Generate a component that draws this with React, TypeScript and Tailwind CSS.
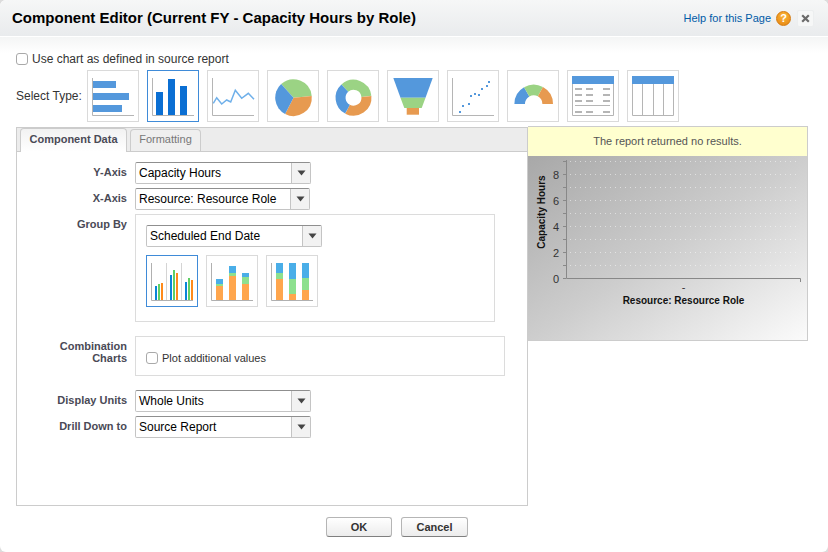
import type { ReactNode } from "react";

const font = "font-['Liberation_Sans',Arial,sans-serif]";

function IconBox({ selected, children }: { selected?: boolean; children: ReactNode }) {
  return (
    <div className={`h-[52px] w-[52px] shrink-0 border ${selected ? "border-[#3f8bd8]" : "border-[#dadada]"} bg-white`}>
      <svg width="50" height="50" viewBox="1 1 50 50" className="block">
        {children}
      </svg>
    </div>
  );
}

function Axes({ x = 5 }: { x?: number }) {
  return <path d={`M${x}.5 8V45.5H47`} fill="none" stroke="#b5b5b5" strokeWidth="1" />;
}

const chartBlue = "#5498dc";
const chartGreen = "#9bd384";
const chartOrange = "#e79a50";

const chartTypes: { key: string; selected?: boolean; art: ReactNode }[] = [
  {
    key: "hbar",
    art: (
      <>
        <Axes />
        <rect x="6" y="11" width="23" height="7" fill={chartBlue} />
        <rect x="6" y="23" width="36" height="7" fill={chartBlue} />
        <rect x="6" y="35" width="29" height="7" fill={chartBlue} />
      </>
    ),
  },
  {
    key: "vbar",
    selected: true,
    art: (
      <>
        <Axes />
        <rect x="9" y="22" width="7" height="23" fill="#0b6fd3" />
        <rect x="21" y="9" width="7" height="36" fill="#0b6fd3" />
        <rect x="33" y="16" width="7" height="29" fill="#0b6fd3" />
      </>
    ),
  },
  {
    key: "line",
    art: (
      <>
        <Axes />
        <polyline
          points="6.3,33.3 9.7,27.7 14.7,34 19.7,30 23.7,32 28.3,20.3 34.7,28.3 41.3,23.3 47,29.3"
          fill="none"
          stroke="#6fb0ea"
          strokeWidth="1.5"
        />
      </>
    ),
  },
  {
    key: "pie",
    art: (
      <>
        <path d="M26.5 27.7L14.2 14.1A18.3 18.3 0 0 1 44.7 25.9Z" fill={chartGreen} />
        <path d="M26.5 27.7L44.7 25.9A18.3 18.3 0 0 1 18.1 43.9Z" fill={chartOrange} />
        <path d="M26.5 27.7L18.1 43.9A18.3 18.3 0 0 1 14.2 14.1Z" fill={chartBlue} />
      </>
    ),
  },
  {
    key: "donut",
    art: (
      <g fill="none" strokeWidth="10">
        <path d="M17.8 18.1A13 13 0 0 1 39.4 26.4" stroke={chartGreen} />
        <path d="M39.4 26.4A13 13 0 0 1 20.5 39.2" stroke={chartOrange} />
        <path d="M20.5 39.2A13 13 0 0 1 17.8 18.1" stroke={chartBlue} />
      </g>
    ),
  },
  {
    key: "funnel",
    art: (
      <>
        <path d="M6.3 8H45.7L38.5 27.7H13.5Z" fill={chartBlue} />
        <path d="M13.5 27.7H38.5L34.7 38H17.3Z" fill={chartGreen} />
        <path d="M19.7 38H32V44.7H19.7Z" fill={chartOrange} />
      </>
    ),
  },
  {
    key: "scatter",
    art: (
      <>
        <Axes />
        {[[12, 41], [15, 35], [21, 33], [23, 25], [27, 23], [31, 24], [34, 18], [39, 15], [41, 11]].map(([x, y]) => (
          <rect key={x} x={x} y={y} width="2" height="2" fill={chartBlue} />
        ))}
      </>
    ),
  },
  {
    key: "gauge",
    art: (
      <g fill="none" strokeWidth="10.6">
        <path d="M12.7 34A14 14 0 0 1 19.7 21.9" stroke={chartBlue} />
        <path d="M19.7 21.9A14 14 0 0 1 33.4 21.7" stroke={chartGreen} />
        <path d="M33.4 21.7A14 14 0 0 1 40.7 34" stroke={chartOrange} />
      </g>
    ),
  },
  {
    key: "table",
    art: (
      <>
        <rect x="5" y="6" width="42" height="8" fill={chartBlue} />
        <path d="M5.5 14V45.5H46.5V14" fill="none" stroke="#b5b5b5" />
        {[18, 24, 30, 41].map((y) => (
          <g key={y} fill="#b5b5b5">
            <rect x="8" y={y} width="7" height="2" />
            <rect x="19" y={y} width="7" height="2" />
            <rect x="36" y={y} width="7" height="2" />
          </g>
        ))}
        <rect x="8" y="35" width="35" height="1" fill="#b5b5b5" />
      </>
    ),
  },
  {
    key: "matrix",
    art: (
      <>
        <rect x="5" y="6" width="42" height="8" fill={chartBlue} />
        <path d="M5.5 14V45.5H46.5V14M15.5 14V45.5M26.5 14V45.5M36.5 14V45.5" fill="none" stroke="#b5b5b5" />
      </>
    ),
  },
];

function SubAxes() {
  return <path d="M5.5 8V45.5H47" fill="none" stroke="#b0b0b0" />;
}

function ClusteredIcon() {
  const clusters = [
    [9, 31, 29, 28],
    [24, 20, 15, 18],
    [39, 27, 23, 25],
  ];
  return (
    <>
      <path d="M20.5 8V45M35.5 8V45" stroke="#d4d4d4" />
      <SubAxes />
      {clusters.map(([x, a, b, c]) => (
        <g key={x}>
          <rect x={x} y={a} width="2" height={45 - a} fill="#0a84d8" />
          <rect x={x + 3} y={b} width="2" height={45 - b} fill="#5fd065" />
          <rect x={x + 6} y={c} width="2" height={45 - c} fill="#ff8a1a" />
        </g>
      ))}
    </>
  );
}

function StackedIcon({ bars }: { bars: number[][] }) {
  return (
    <>
      <SubAxes />
      {bars.map(([x, top, mid, low]) => (
        <g key={x}>
          <rect x={x} y={top} width="7" height={mid - top} fill="#4aaee8" />
          <rect x={x} y={mid} width="7" height={low - mid} fill="#8de08f" />
          <rect x={x} y={low} width="7" height={45 - low} fill="#ffa64d" />
        </g>
      ))}
    </>
  );
}

function SelectBox({ label, width = "w-[176px]" }: { label: string; width?: string }) {
  return (
    <div className={`flex h-[22px] ${width} rounded-[2px] border border-[#c4c4c4] border-t-[#8f8f8f] bg-white`}>
      <div className="flex-1 truncate pl-[3px] text-[12px] leading-[21px] text-black">{label}</div>
      <div className="flex w-[19px] items-center justify-center border-l border-[#c4c4c4] bg-[#f2f2f2]">
        <svg width="9" height="6" viewBox="0 0 9 6">
          <path d="M0.5 0.5H8.5L4.5 5.5Z" fill="#444" />
        </svg>
      </div>
    </div>
  );
}

function FieldLabel({ children }: { children: ReactNode }) {
  return <div className="w-[110px] shrink-0 pb-[2px] text-right text-[11px] font-bold leading-[12px] text-[#4a4a56]">{children}</div>;
}

function Check({ label, className }: { label: string; className: string }) {
  return (
    <label className={`flex items-center ${className}`}>
      <span className="h-3 w-3 shrink-0 rounded-[3px] border border-[#a9a9a9] bg-white" />
      <span>{label}</span>
    </label>
  );
}

function ChartPreview() {
  const grid = [5.5, 18.5, 31.5, 44.5, 57.5, 70.5, 83.5, 96.5, 109.5];
  const labels = [
    ["8", 18.3],
    ["6", 44.3],
    ["4", 70.3],
    ["2", 96.3],
    ["0", 122.3],
  ] as const;
  return (
    <div className="h-[184px] bg-linear-to-br from-[#a8a8a8] via-[#cdcdcd] to-[#fbfbfb]">
      <svg width="279" height="184" viewBox="0 0 279 184" className="block">
        {grid.map((y) => (
          <line key={y} x1="42" x2="270" y1={y} y2={y} stroke="#ffffff" strokeOpacity="0.5" strokeDasharray="1 4" />
        ))}
        <path d="M38.5 4V122.5H272.5V126" fill="none" stroke="#888" />
        {[5, 18, 31, 44, 57, 70, 83, 96, 109, 122].map((y) => (
          <line key={y} x1="35" x2="38" y1={y + 0.5} y2={y + 0.5} stroke="#888" />
        ))}
        {labels.map(([t, y]) => (
          <text key={t} x="31" y={y + 5} textAnchor="end" fontSize="11" fill="#333" fontFamily="Liberation Sans">
            {t}
          </text>
        ))}
        <text
          transform="translate(17 56) rotate(-90)"
          textAnchor="middle"
          fontSize="10"
          fontWeight="bold"
          fill="#111"
          fontFamily="Liberation Sans"
        >
          Capacity Hours
        </text>
        <text x="155.5" y="135" textAnchor="middle" fontSize="11" fill="#333" fontFamily="Liberation Sans">
          -
        </text>
        <text x="155.5" y="148" textAnchor="middle" fontSize="10" fontWeight="bold" fill="#111" fontFamily="Liberation Sans">
          Resource: Resource Role
        </text>
      </svg>
    </div>
  );
}

export default function App() {
  return (
    <div className={`h-[552px] w-[828px] overflow-hidden bg-[#dcdcdc] ${font}`}>
      <div className="flex h-full flex-col overflow-hidden rounded-[6px] bg-white">
        <header className="flex h-9 shrink-0 items-center justify-between bg-linear-to-b from-[#f6f7f7] to-[#e9ebed] pl-3 pr-[14px]">
          <h1 className="text-[15px] font-bold text-black">Component Editor (Current FY - Capacity Hours by Role)</h1>
          <div className="flex items-center">
            <a href="#" className="text-[11px] text-[#015ba7]">
              Help for this Page
            </a>
            <span className="ml-[5px] flex h-[15px] w-[15px] items-center justify-center rounded-full border border-[#d57a0c] bg-[radial-gradient(circle_at_50%_30%,#fbb63a,#e5830f)] text-[11px] font-bold leading-none text-white">
              ?
            </span>
            <button className="ml-[6px] flex h-[17px] w-[17px] items-center justify-center rounded-[2px] border border-[#eceeef] bg-[#f6f7f7]">
              <svg width="9" height="9" viewBox="0 0 9 9">
                <path d="M1.2 1.2L7.8 7.8M7.8 1.2L1.2 7.8" stroke="#6a6a6a" strokeWidth="2.2" />
              </svg>
            </button>
          </div>
        </header>
        <div className="h-[17px] shrink-0 border-t border-white bg-linear-to-b from-[#f4f5f5] to-white" />

        <Check label="Use chart as defined in source report" className="ml-4 h-[11px] gap-1 text-[12px] text-[#333]" />

        <div className="ml-4 mt-[6px] flex h-[52px] shrink-0 items-center">
          <span className="w-[71px] text-[12px] text-[#333]">Select Type:</span>
          <div className="flex gap-2">
            {chartTypes.map((t) => (
              <IconBox key={t.key} selected={t.selected}>
                {t.art}
              </IconBox>
            ))}
          </div>
        </div>

        <div className="ml-4 mt-[5px] flex items-start">
          <div className="h-[379px] w-[512px] shrink-0 border border-[#cccccc]">
            <div className="flex h-6 items-end gap-[3px] border-b border-[#cccccc] bg-[#ececec] pl-[3px]">
              <div className="-mb-px flex h-[24px] w-[107px] items-center justify-center rounded-t-[4px] border border-b-0 border-[#cccccc] bg-linear-to-b from-[#f2f2f2] to-white pb-[3px] text-[11px] font-bold text-[#4a4a56]">
                Component Data
              </div>
              <div className="flex h-[22px] w-[71px] items-center justify-center rounded-t-[4px] border border-b-0 border-[#cccccc] bg-[#efefef] pb-[3px] text-[11px] text-[#777]">
                Formatting
              </div>
            </div>

            <div className="flex flex-col pt-[10px]">
              <div className="flex h-[22px] items-center gap-2">
                <FieldLabel>Y-Axis</FieldLabel>
                <SelectBox label="Capacity Hours" />
              </div>
              <div className="mt-1 flex h-[22px] items-center gap-2">
                <FieldLabel>X-Axis</FieldLabel>
                <SelectBox label="Resource: Resource Role" width="w-[175px]" />
              </div>
              <div className="mt-1 flex items-start gap-2">
                <div className="pt-[4px]">
                  <FieldLabel>Group By</FieldLabel>
                </div>
                <div className="h-[108px] w-[360px] border border-[#dcdcdc] pl-[10px] pt-[10px]">
                  <SelectBox label="Scheduled End Date" />
                  <div className="mt-2 flex gap-2">
                    <IconBox selected>
                      <ClusteredIcon />
                    </IconBox>
                    <IconBox>
                      <StackedIcon bars={[[10, 24, 29, 31], [23, 11, 18, 21], [36, 18, 22, 29]]} />
                    </IconBox>
                    <IconBox>
                      <StackedIcon bars={[[10, 8, 18, 24], [23, 8, 24, 39], [36, 8, 23, 35]]} />
                    </IconBox>
                  </div>
                </div>
              </div>
              <div className="mt-[14px] flex items-start gap-2">
                <div className="pt-[4px]">
                  <FieldLabel>
                    Combination
                    <br />
                    Charts
                  </FieldLabel>
                </div>
                <div className="flex h-10 w-[370px] items-center border border-[#dcdcdc] pl-[10px] pt-[4px]">
                  <Check label="Plot additional values" className="gap-1 text-[11px] text-[#333]" />
                </div>
              </div>
              <div className="mt-[14px] flex h-[22px] items-center gap-2">
                <FieldLabel>Display Units</FieldLabel>
                <SelectBox label="Whole Units" />
              </div>
              <div className="mt-1 flex h-[22px] items-center gap-2">
                <FieldLabel>Drill Down to</FieldLabel>
                <SelectBox label="Source Report" />
              </div>
            </div>
          </div>

          <div className="-mt-px w-[280px] shrink-0 border border-l-0 border-[#cccccc]">
            <div className="flex h-[29px] items-center justify-center bg-[#ffffcf] text-[11px] text-[#555]">
              The report returned no results.
            </div>
            <ChartPreview />
          </div>
        </div>

        <div className="ml-[326px] mt-[11px] flex gap-[9px]">
          <button className="h-[20px] w-[66px] rounded-[3px] border border-[#b5b5b5] border-b-[#7f7f7f] bg-linear-to-b from-white to-[#ececec] text-[11px] font-bold text-[#333]">
            OK
          </button>
          <button className="h-[20px] w-[67px] rounded-[3px] border border-[#b5b5b5] border-b-[#7f7f7f] bg-linear-to-b from-white to-[#ececec] text-[11px] font-bold text-[#333]">
            Cancel
          </button>
        </div>
      </div>
    </div>
  );
}
